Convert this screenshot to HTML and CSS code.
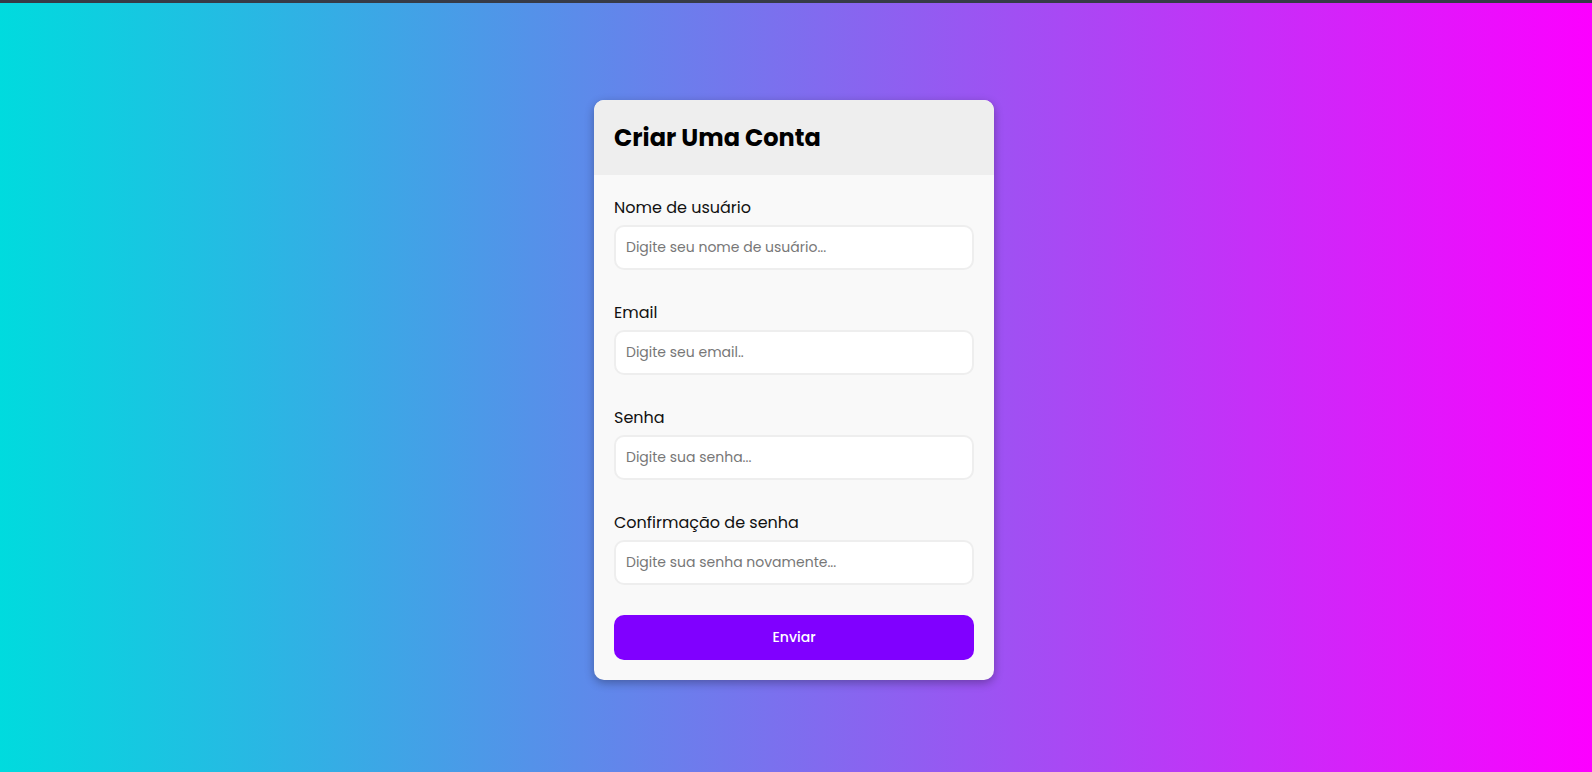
FILE: index.html
```html
<!DOCTYPE html>
<html lang="pt-BR">
<head>
<meta charset="UTF-8">
<title>Criar Uma Conta</title>
<link rel="stylesheet" href="styles.css">
</head>
<body>
<div class="topbar"></div>
<main class="stage">
  <form class="card">
    <div class="card-header">
      <h1 class="title">Criar Uma Conta</h1>
    </div>
    <div class="card-body">
      <div class="field">
        <label class="label" for="user">Nome de usuário</label>
        <input class="input" id="user" type="text" placeholder="Digite seu nome de usuário...">
      </div>
      <div class="field">
        <label class="label" for="email">Email</label>
        <input class="input" id="email" type="email" placeholder="Digite seu email..">
      </div>
      <div class="field">
        <label class="label" for="pass">Senha</label>
        <input class="input" id="pass" type="password" placeholder="Digite sua senha...">
      </div>
      <div class="field">
        <label class="label" for="pass2">Confirmação de senha</label>
        <input class="input" id="pass2" type="password" placeholder="Digite sua senha novamente...">
      </div>
      <button class="btn" type="button">Enviar</button>
    </div>
  </form>
</main>
</body>
</html>
```

FILE: styles.css
```css
* { box-sizing: border-box; }

html, body {
  margin: 0;
  padding: 0;
  height: 100%;
}

body {
  font-family: "Poppins", "Inter", "Liberation Sans", sans-serif;
  background: linear-gradient(to right, #00dbde, #fc00ff);
  overflow: hidden;
}

.topbar {
  height: 3px;
  background: #363b47;
}

.stage {
  height: calc(100vh - 3px);
  padding-top: 5px;
  padding-right: 4px;
  display: flex;
  align-items: center;
  justify-content: center;
}

.card {
  width: 400px;
  border-radius: 10px;
  background: #f9f9f9;
  box-shadow: 0 3px 10px rgba(0, 0, 0, 0.3);
  overflow: hidden;
}

.card-header {
  height: 75px;
  background: #eeeeee;
  padding: 0 20px;
  display: flex;
  align-items: center;
}

.title {
  margin: 0;
  font-size: 24px;
  font-weight: 700;
  color: #000;
}

.card-body {
  padding: 20px;
  display: flex;
  flex-direction: column;
}

.field {
  display: flex;
  flex-direction: column;
  gap: 5px;
  margin-bottom: 30px;
}

.label {
  font-size: 16px;
  line-height: 25px;
  color: #111;
}

.input {
  height: 45px;
  width: 100%;
  border: 2px solid #eeeeee;
  border-radius: 10px;
  background: #fff;
  padding: 0 10px;
  font-family: inherit;
  font-size: 14px;
  outline: none;
}

.input::placeholder {
  color: #777;
}

.btn {
  height: 45px;
  width: 100%;
  border: none;
  border-radius: 10px;
  background: #8000ff;
  color: #fff;
  font-family: inherit;
  font-size: 14px;
  font-weight: 500;
  cursor: pointer;
}
```
